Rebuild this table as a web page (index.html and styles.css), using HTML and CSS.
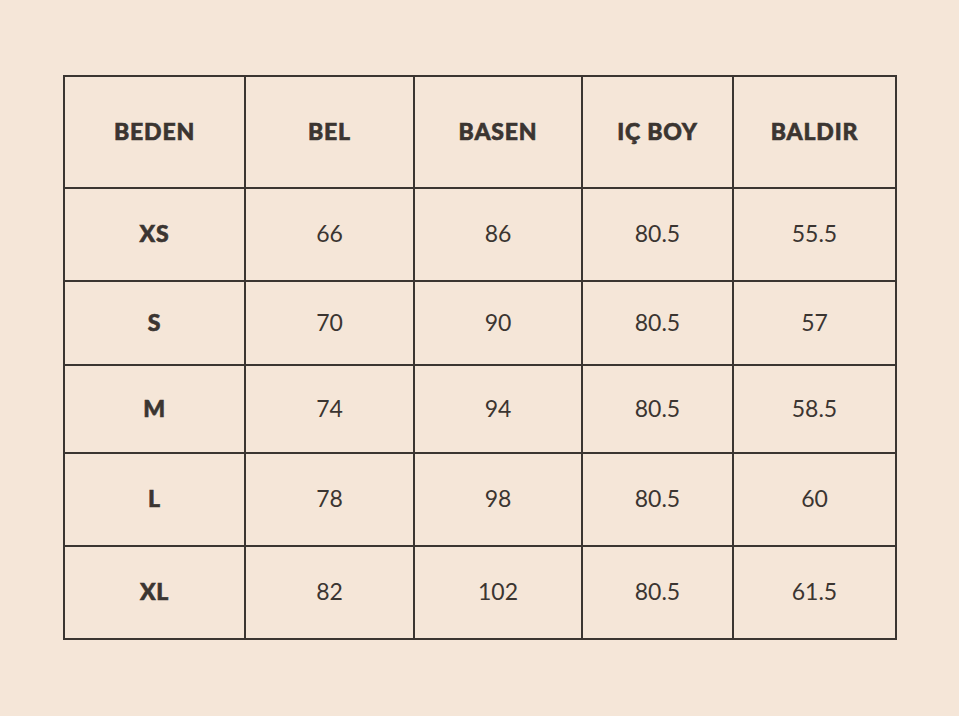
FILE: index.html
```html
<!DOCTYPE html>
<html lang="tr">
<head>
<meta charset="utf-8">
<title>Beden Tablosu</title>
<link rel="stylesheet" href="styles.css">
</head>
<body>
<div class="page">
  <div class="chart">
    <div class="cell head">BEDEN</div>
    <div class="cell head">BEL</div>
    <div class="cell head">BASEN</div>
    <div class="cell head">IÇ BOY</div>
    <div class="cell head">BALDIR</div>

    <div class="cell size">XS</div>
    <div class="cell">66</div>
    <div class="cell">86</div>
    <div class="cell">80.5</div>
    <div class="cell">55.5</div>

    <div class="cell size">S</div>
    <div class="cell">70</div>
    <div class="cell">90</div>
    <div class="cell">80.5</div>
    <div class="cell">57</div>

    <div class="cell size">M</div>
    <div class="cell">74</div>
    <div class="cell">94</div>
    <div class="cell">80.5</div>
    <div class="cell">58.5</div>

    <div class="cell size">L</div>
    <div class="cell">78</div>
    <div class="cell">98</div>
    <div class="cell">80.5</div>
    <div class="cell">60</div>

    <div class="cell size">XL</div>
    <div class="cell">82</div>
    <div class="cell">102</div>
    <div class="cell">80.5</div>
    <div class="cell">61.5</div>
  </div>
</div>
</body>
</html>
```
FILE: styles.css
```css
html, body {
  margin: 0;
  padding: 0;
  background: #f5e6d8;
}
.page {
  width: 959px;
  height: 716px;
  padding: 75px 0 0 63px;
  box-sizing: border-box;
}
.chart {
  display: grid;
  grid-template-columns: 179px 167px 166px 149px 161px;
  grid-template-rows: 110px 91px 82px 86px 91px 91px;
  gap: 2px;
  padding: 2px;
  width: max-content;
  background: #3b3531;
}
.cell {
  background: #f5e6d8;
  display: flex;
  align-items: center;
  justify-content: center;
  padding-bottom: 3px;
  box-sizing: border-box;
  font-family: Lato, "Open Sans", sans-serif;
  font-size: 23px;
  font-weight: 400;
  color: #3b3531;
}
.head, .size {
  font-weight: 900;
  font-size: 23px;
  letter-spacing: 0.8px;
  -webkit-text-stroke: 0.6px #3b3531;
}
```
